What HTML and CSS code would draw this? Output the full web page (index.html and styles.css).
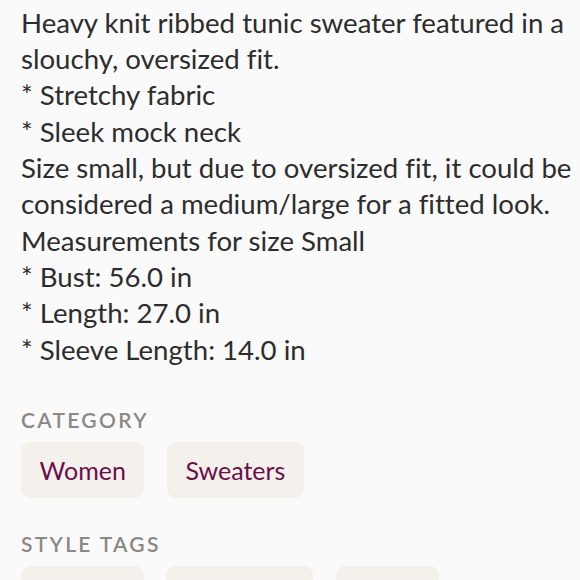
FILE: index.html
```html
<!DOCTYPE html>
<html lang="en">
<head>
<meta charset="utf-8">
<title>Listing details</title>
<link rel="stylesheet" href="styles.css">
</head>
<body>
<main class="listing">
  <p class="description">Heavy knit ribbed tunic sweater featured in a
slouchy, oversized fit.
* Stretchy fabric
* Sleek mock neck
Size small, but due to oversized fit, it could be
considered a medium/large for a fitted look.
Measurements for size Small
* Bust: 56.0 in
* Length: 27.0 in
* Sleeve Length: 14.0 in</p>

  <section class="section section-category">
    <h3 class="section-title">Category</h3>
    <ul class="chips">
      <li class="chip">Women</li>
      <li class="chip">Sweaters</li>
    </ul>
  </section>

  <section class="section section-tags">
    <h3 class="section-title">Style Tags</h3>
    <ul class="chips">
      <li class="chip">Slouchy</li>
      <li class="chip">Oversized</li>
      <li class="chip">Warm</li>
    </ul>
  </section>
</main>
</body>
</html>
```
FILE: styles.css
```css
html, body {
  margin: 0;
  padding: 0;
  background: #fafafa;
}

body {
  font-family: Lato, "Noto Sans", sans-serif;
  font-variant-ligatures: none;
  color: #2d2d2d;
  overflow: hidden;
  height: 580px;
}

.listing {
  padding: 4.6px 0 0 21px;
}

.description {
  margin: 0;
  font-size: 27.6px;
  line-height: 36.35px;
  white-space: pre;
}

.section-category {
  margin-top: 38px;
}

.section-tags {
  margin-top: 32px;
}

.section-title {
  margin: 0 0 8px;
  font-size: 21px;
  line-height: 28px;
  font-weight: 600;
  letter-spacing: 2.3px;
  text-transform: uppercase;
  color: #8c8884;
}

.chips {
  list-style: none;
  margin: 0;
  padding: 0;
  display: flex;
  gap: 22.5px;
}

.chip {
  background: #f4f1ec;
  color: #6b0f4b;
  border-radius: 9px;
  padding: 10px 18.5px;
  font-size: 25px;
  line-height: 36px;
}
```
